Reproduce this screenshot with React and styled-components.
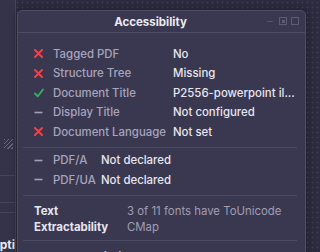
import React from 'react';
import styled, { createGlobalStyle } from 'styled-components';

const GlobalStyle = createGlobalStyle`
  html, body {
    margin: 0;
    padding: 0;
    background: #2c2b3f;
  }
  body {
    font-family: Inter, "Noto Sans", "Liberation Sans", sans-serif;
    -webkit-font-smoothing: antialiased;
  }
`;

const Desk = styled.div`
  position: relative;
  width: 320px;
  height: 252px;
  overflow: hidden;
  background-color: #2c2b3f;
  background-image: radial-gradient(circle, #3c3b52 0.8px, transparent 1.2px);
  background-size: 5px 5px;
`;

const BackWindow = styled.div`
  position: absolute;
  left: 0;
  top: 0;
  width: 15px;
  height: 252px;
  background: #34334a;
  border-right: 1px solid #47455e;
  display: flex;
  flex-direction: column;
`;

const BackPane = styled.div`
  height: 176px;
  border-bottom: 1px solid #47455e;
  display: flex;
  flex-direction: column;
  justify-content: flex-end;
  padding-bottom: 26px;
  box-sizing: border-box;
`;

const Hatch = styled.div`
  width: 9px;
  height: 10px;
  margin-left: 4px;
  background: repeating-linear-gradient(135deg, #6a6884 0 1px, transparent 1px 3px);
`;

const BackLine = styled.div`
  height: 1px;
  background: #47455e;
  margin-top: ${p => p.$gap}px;
`;

const BackLabel = styled.div`
  margin-top: auto;
  margin-bottom: 0;
  display: flex;
  justify-content: flex-end;
  overflow: hidden;
  white-space: nowrap;
  font-size: 12px;
  font-weight: 700;
  color: #ecebf3;
  line-height: 14px;
`;

const Panel = styled.div`
  position: absolute;
  left: 17px;
  top: 10px;
  width: 289px;
  height: 260px;
  box-sizing: border-box;
  background: #3a3850;
  border: 1px solid #4e4c65;
  border-radius: 5px 5px 0 0;
  box-shadow: 0 0 8px rgba(0, 0, 0, 0.35);
`;

const TitleBar = styled.div`
  position: relative;
  height: 21px;
  display: flex;
  align-items: center;
  justify-content: center;
  padding-right: 22px;
  border-bottom: 1px solid #4e4c65;
`;

const Title = styled.span`
  font-size: 11.5px;
  font-weight: 700;
  color: #ecebf3;
`;

const Controls = styled.div`
  position: absolute;
  right: 6px;
  top: 6px;
  display: flex;
  align-items: center;
  gap: 4px;
`;

const Dash = styled.div`
  width: 6px;
  height: 1px;
  background: #55536c;
  margin-right: 2px;
`;

const Square = styled.div`
  width: 6px;
  height: 6px;
  border: 1px solid #5c5a74;
  display: flex;
  align-items: center;
  justify-content: center;
  &::after {
    content: '';
    width: 3px;
    height: 3px;
    background: ${p => (p.$filled ? '#5c5a74' : 'transparent')};
  }
`;

const Section = styled.div`
  padding: ${p => p.$pad};
`;

const Divider = styled.div`
  height: 1px;
  background: #4d4b64;
  margin: 0 8px 0 5px;
`;

const Row = styled.div`
  display: grid;
  grid-template-columns: ${p => p.$cols};
  align-items: center;
  height: ${p => p.$h}px;
  font-size: 11.4px;
  white-space: nowrap;
`;

const IconCell = styled.span`
  display: flex;
  align-items: center;
`;

const Label = styled.span`
  font-weight: 500;
  color: #a7a4bc;
`;

const Value = styled.span`
  font-weight: 500;
  color: #e7e6ef;
  overflow: hidden;
`;

const Key = styled.span`
  font-weight: 700;
  color: #e7e6ef;
`;

const Note = styled.span`
  font-weight: 400;
  color: #a09db4;
`;

const Right = styled.span`
  font-weight: 500;
  color: #a09db4;
  text-align: right;
  padding-right: 8px;
`;

const Cross = () => (
  <svg width="9" height="9" viewBox="0 0 9 9">
    <path d="M1 1 L8 8 M8 1 L1 8" stroke="#e5464f" strokeWidth="2" strokeLinecap="round" />
  </svg>
);

const Check = () => (
  <svg width="10" height="10" viewBox="0 0 10 10">
    <path d="M1 5.5 L3.8 8.3 L9 1.5" stroke="#2fb55e" strokeWidth="1.8" fill="none" strokeLinecap="round" strokeLinejoin="round" />
  </svg>
);

const Minus = () => (
  <svg width="9" height="9" viewBox="0 0 9 9">
    <path d="M0.5 4.5 L8.5 4.5" stroke="#a29fb7" strokeWidth="1.6" />
  </svg>
);

const icons = { no: <Cross />, ok: <Check />, na: <Minus /> };

const checks = [
  { s: 'no', label: 'Tagged PDF', value: 'No' },
  { s: 'no', label: 'Structure Tree', value: 'Missing' },
  { s: 'ok', label: 'Document Title', value: 'P2556-powerpoint il...' },
  { s: 'na', label: 'Display Title', value: 'Not configured' },
  { s: 'no', label: 'Document Language', value: 'Not set' },
];

const standards = [
  { label: 'PDF/A', value: 'Not declared' },
  { label: 'PDF/UA', value: 'Not declared' },
];

const App = () => (
  <>
    <GlobalStyle />
    <Desk>
      <BackWindow>
        <BackPane>
          <Hatch />
        </BackPane>
        <BackLine $gap={26} />
        <BackLine $gap={9} />
        <BackLabel>Corrupti</BackLabel>
      </BackWindow>
      <Panel>
        <TitleBar>
          <Title>Accessibility</Title>
          <Controls>
            <Dash />
            <Square $filled />
            <Square />
          </Controls>
        </TitleBar>
        <Section $pad="11px 0 5.5px 16px">
          {checks.map(c => (
            <Row key={c.label} $cols="19px 120px 1fr" $h={19.5}>
              <IconCell>{icons[c.s]}</IconCell>
              <Label>{c.label}</Label>
              <Value>{c.value}</Value>
            </Row>
          ))}
        </Section>
        <Divider />
        <Section $pad="2.5px 0 5.5px 16px">
          {standards.map(c => (
            <Row key={c.label} $cols="19px 48px 1fr" $h={19.5}>
              <IconCell><Minus /></IconCell>
              <Label>{c.label}</Label>
              <Value>{c.value}</Value>
            </Row>
          ))}
        </Section>
        <Divider />
        <Section $pad="7px 0 5px 16px">
          <Row $cols="93px 1fr" $h={16}>
            <Key>Text</Key>
            <Note>3 of 11 fonts have ToUnicode</Note>
          </Row>
          <Row $cols="93px 1fr" $h={16}>
            <Key>Extractability</Key>
            <Note>CMap</Note>
          </Row>
        </Section>
        <Divider />
        <Section $pad="8px 0 0 16px">
          <Row $cols="auto 1fr" $h={16}>
            <Key>Image Description</Key>
            <Right>N/A</Right>
          </Row>
        </Section>
      </Panel>
    </Desk>
  </>
);

export default App;
